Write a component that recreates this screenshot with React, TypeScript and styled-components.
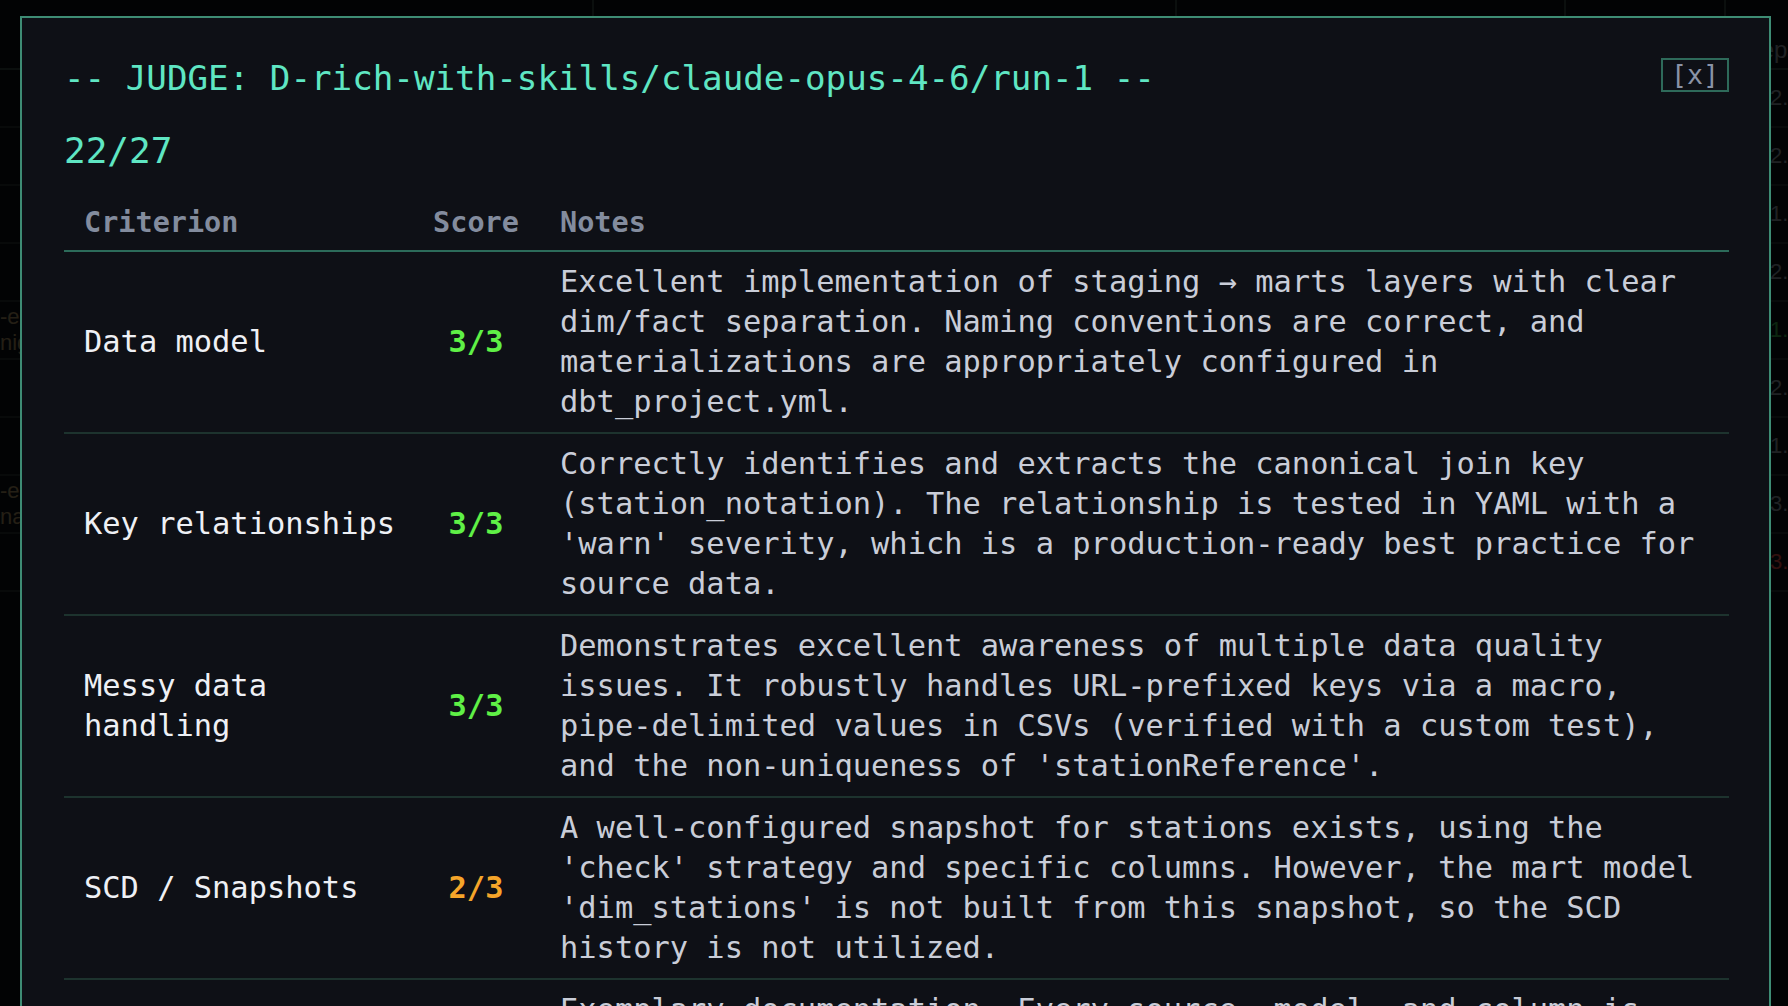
import React from "react";
import styled, { createGlobalStyle } from "styled-components";

interface Criterion {
  name: string;
  score: number;
  max: number;
  notes: string;
}

const criteria: Criterion[] = [
  {
    name: "Data model",
    score: 3,
    max: 3,
    notes:
      "Excellent implementation of staging \u2192 marts layers with clear dim/fact separation. Naming conventions are correct, and materializations are appropriately configured in dbt_project.yml.",
  },
  {
    name: "Key relationships",
    score: 3,
    max: 3,
    notes:
      "Correctly identifies and extracts the canonical join key (station_notation). The relationship is tested in YAML with a 'warn' severity, which is a production-ready best practice for source data.",
  },
  {
    name: "Messy data handling",
    score: 3,
    max: 3,
    notes:
      "Demonstrates excellent awareness of multiple data quality issues. It robustly handles URL-prefixed keys via a macro, pipe-delimited values in CSVs (verified with a custom test), and the non-uniqueness of 'stationReference'.",
  },
  {
    name: "SCD / Snapshots",
    score: 2,
    max: 3,
    notes:
      "A well-configured snapshot for stations exists, using the 'check' strategy and specific columns. However, the mart model 'dim_stations' is not built from this snapshot, so the SCD history is not utilized.",
  },
  {
    name: "Documentation",
    score: 3,
    max: 3,
    notes:
      "Exemplary documentation. Every source, model, and column is described in YAML, with clear descriptions and tests defined on all of the key columns.",
  },
];

const TOTAL = 22;
const MAX_TOTAL = 27;

// rows of the runs table that sits behind the modal
const backgroundRows = [
  { left: "", value: "2.41", tone: "plain" },
  { left: "", value: "2.18", tone: "plain" },
  { left: "", value: "1.90", tone: "plain" },
  { left: "", value: "2.05", tone: "plain" },
  { left: "-enriched", sub: "nightly", value: "1.52", tone: "good" },
  { left: "", value: "2.27", tone: "plain" },
  { left: "", value: "1.77", tone: "plain" },
  { left: "-enriched", sub: "naive", value: "3.10", tone: "plain" },
  { left: "", value: "3.64", tone: "bad" },
];

const GlobalStyle = createGlobalStyle`
  html, body {
    margin: 0;
    padding: 0;
    background: #0d1117;
    overflow: hidden;
  }
  body {
    font-family: "DejaVu Sans Mono", "Liberation Mono", monospace;
  }
`;

const Page = styled.div`
  width: 1788px;
  height: 1006px;
  overflow: hidden;
  background: #0d1117;
  font-family: "Liberation Sans", Arial, sans-serif;
`;

const BgGrid = styled.div`
  display: grid;
  grid-template-columns: 594px 583px 389px 160px 1fr;
`;

const BgHead = styled.div`
  height: 70px;
  box-sizing: border-box;
  border-right: 2px solid #3a4a45;
  border-bottom: 2px solid #3a4a45;
  padding: 36px 0 0 12px;
  color: #9aa3ad;
  font-size: 24px;
`;

const BgCell = styled.div<{ $tone?: string }>`
  height: 58px;
  box-sizing: border-box;
  border-bottom: 2px solid #2a3632;
  display: flex;
  flex-direction: column;
  justify-content: center;
  padding-left: ${(p) => (p.$tone ? "44px" : "0")};
  font-size: 22px;
  line-height: 26px;
  color: ${(p) =>
    p.$tone === "good"
      ? "#3fb950"
      : p.$tone === "bad"
      ? "#f85149"
      : p.$tone === "plain"
      ? "#9aa3ad"
      : "#b59a6a"};
`;

const Overlay = styled.div`
  position: fixed;
  inset: 0;
  background: rgba(0, 0, 0, 0.8);
`;

const Modal = styled.div`
  position: fixed;
  top: 16px;
  left: 20px;
  width: 1751px;
  box-sizing: border-box;
  border: 2px solid #3e8c74;
  background: #0e1016;
  padding: 40px 40px 40px 42px;
  font-family: "DejaVu Sans Mono", "Liberation Mono", monospace;
`;

const TitleRow = styled.div`
  display: flex;
  justify-content: space-between;
  align-items: flex-start;
`;

const Title = styled.h2`
  margin: 0;
  font-size: 34.2px;
  line-height: 41px;
  font-weight: 400;
  color: #5fe6c3;
  white-space: nowrap;
`;

const CloseButton = styled.button`
  height: 34px;
  margin: 0;
  padding: 0 8px;
  border: 2px solid #2e6a5a;
  background: transparent;
  color: #8a93a6;
  font-family: inherit;
  font-size: 26.6px;
  line-height: 30px;
`;

const Total = styled.div`
  margin-top: 30px;
  font-size: 36px;
  line-height: 44px;
  color: #5fe6c3;
`;

const Table = styled.div`
  margin-top: 21px;
`;

const Row = styled.div<{ $head?: boolean }>`
  display: grid;
  grid-template-columns: 348px 128px 1fr;
  align-items: center;
  border-bottom: 2px solid ${(p) => (p.$head ? "#2c6b5a" : "#1d332e")};
`;

const HeadCell = styled.div<{ $center?: boolean }>`
  padding: 10px 20px 9px;
  ${(p) => p.$center && "padding-left: 0; padding-right: 0; text-align: center;"}
  font-size: 28.5px;
  line-height: 37px;
  font-weight: 600;
  color: #838c9e;
`;

const NameCell = styled.div`
  padding: 0 12px 0 20px;
  font-size: 30.4px;
  line-height: 40px;
  color: #eef0f5;
`;

const ScoreCell = styled.div<{ $full: boolean }>`
  text-align: center;
  font-size: 30.4px;
  line-height: 40px;
  font-weight: 700;
  color: ${(p) => (p.$full ? "#5ff046" : "#f5a52a")};
`;

const NotesCell = styled.div`
  padding: 10px 20px;
  font-size: 30.4px;
  line-height: 40px;
  color: #c9cdd8;
`;

export default function App() {
  return (
    <>
      <GlobalStyle />
      <Page>
        <BgGrid>
          <BgHead />
          <BgHead />
          <BgHead />
          <BgHead />
          <BgHead>Steps</BgHead>
          {backgroundRows.map((r, i) => (
            <React.Fragment key={i}>
              <BgCell>
                {r.left && <span>{r.left}</span>}
                {r.sub && <span>{r.sub}</span>}
              </BgCell>
              <BgCell />
              <BgCell />
              <BgCell />
              <BgCell $tone={r.tone}>{r.value}</BgCell>
            </React.Fragment>
          ))}
        </BgGrid>
      </Page>
      <Overlay />
      <Modal>
        <TitleRow>
          <Title>-- JUDGE: D-rich-with-skills/claude-opus-4-6/run-1 --</Title>
          <CloseButton>[x]</CloseButton>
        </TitleRow>
        <Total>
          {TOTAL}/{MAX_TOTAL}
        </Total>
        <Table>
          <Row $head>
            <HeadCell>Criterion</HeadCell>
            <HeadCell $center>Score</HeadCell>
            <HeadCell>Notes</HeadCell>
          </Row>
          {criteria.map((c) => (
            <Row key={c.name}>
              <NameCell>{c.name}</NameCell>
              <ScoreCell $full={c.score === c.max}>
                {c.score}/{c.max}
              </ScoreCell>
              <NotesCell>{c.notes}</NotesCell>
            </Row>
          ))}
        </Table>
      </Modal>
    </>
  );
}
